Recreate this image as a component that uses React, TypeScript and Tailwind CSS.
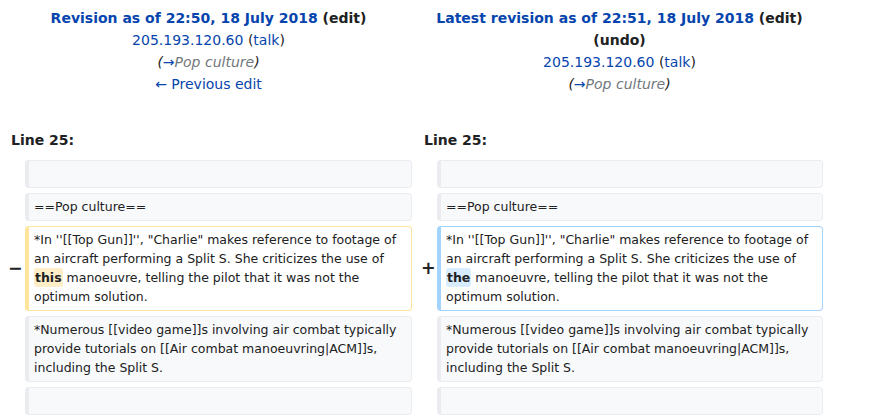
import React from "react";

const link = "text-[#0645ad]";

function Marker({ sign }: { sign?: string }) {
    return (
        <div className="flex items-center pb-[5px] pl-[8px] text-[17.5px] font-bold leading-none text-[#202122]">
            {sign}
        </div>
    );
}

function Box({
    kind = "context",
    width = "w-[387px]",
    children,
}: {
    kind?: "context" | "deleted" | "added";
    width?: string;
    children?: React.ReactNode;
}) {
    const tone =
        kind === "deleted"
            ? "bg-white border-[#ffe49c]"
            : kind === "added"
              ? "bg-white border-[#a3d3ff]"
              : "bg-[#f8f9fa] border-[#eaecf0]";
    return (
        <div className="pb-[5px]">
            <div
                className={`${width} min-h-[28px] rounded-[4px] border border-l-4 pl-[5px] pr-[8px] pt-[3px] pb-[4px] text-[12.5px] leading-[19px] text-[#202122] ${tone}`}
            >
                {children}
            </div>
        </div>
    );
}

const changedText = (word: string, bg: string) => (
    <>
        *In ''[[Top Gun]]'', "Charlie" makes reference to footage of an aircraft performing a Split S. She criticizes
        the use of <span className={`rounded-[3px] ${bg} px-px py-[2px] font-bold`}>{word}</span> manoeuvre, telling the
        pilot that it was not the optimum solution.
    </>
);

const gamesText =
    "*Numerous [[video game]]s involving air combat typically provide tutorials on [[Air combat manoeuvring|ACM]]s, including the Split S.";

export default function App() {
    return (
        <div className="w-[874px] h-[420px] overflow-hidden bg-white font-['DejaVu_Sans',sans-serif] text-[#202122]">
            <div className="grid w-[826px] grid-cols-[25px_388px_24px_389px]">
                {/* titles */}
                <div className="col-span-2 pl-[4px] pt-[7px] text-center text-[14px] leading-[22px]">
                    <div className="font-bold">
                        <span className={link}>Revision as of 22:50, 18 July 2018</span> (edit)
                    </div>
                    <div>
                        <span className={link}>205.193.120.60</span> (<span className={link}>talk</span>)
                    </div>
                    <div className="italic">
                        (<span className={link}>→</span>
                        <span className="text-[#72777d]">Pop culture</span>)
                    </div>
                    <div className={link}>← Previous edit</div>
                </div>
                <div className="col-span-2 pt-[7px] text-center text-[14px] leading-[22px]">
                    <div className="font-bold">
                        <span className={link}>Latest revision as of 22:51, 18 July 2018</span> (edit)
                        <br />
                        (undo)
                    </div>
                    <div>
                        <span className={link}>205.193.120.60</span> (<span className={link}>talk</span>)
                    </div>
                    <div className="italic">
                        (<span className={link}>→</span>
                        <span className="text-[#72777d]">Pop culture</span>)
                    </div>
                </div>

                {/* line numbers */}
                <div className="col-span-2 pl-[11px] pt-[34px] pb-[9px] text-[14px] font-bold leading-[22px]">Line 25:</div>
                <div className="col-span-2 pl-[11px] pt-[34px] pb-[9px] text-[14px] font-bold leading-[22px]">Line 25:</div>

                <Marker />
                <Box />
                <Marker />
                <Box width="w-[386px]" />

                <Marker />
                <Box>==Pop culture==</Box>
                <Marker />
                <Box width="w-[386px]">==Pop culture==</Box>

                <Marker sign="−" />
                <Box kind="deleted">{changedText("this", "bg-[#feeec8]")}</Box>
                <Marker sign="+" />
                <Box kind="added" width="w-[386px]">
                    {changedText("the", "bg-[#d8ecff]")}
                </Box>

                <Marker />
                <Box>{gamesText}</Box>
                <Marker />
                <Box width="w-[386px]">{gamesText}</Box>

                <Marker />
                <Box />
                <Marker />
                <Box width="w-[386px]" />
            </div>
        </div>
    );
}
